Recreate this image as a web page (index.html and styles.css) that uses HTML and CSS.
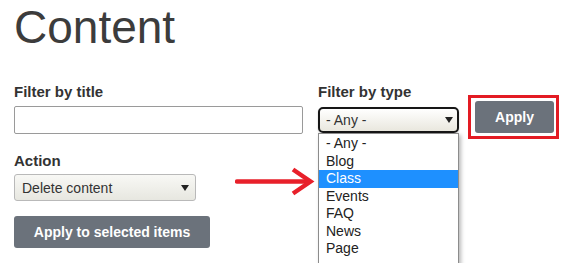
FILE: index.html
```html
<!DOCTYPE html>
<html lang="en">
<head>
<meta charset="utf-8">
<title>Content</title>
<link rel="stylesheet" href="styles.css">
</head>
<body>
<main class="page">
  <h1 class="title">Content</h1>
  <div class="filters">
    <div class="field field-title">
      <label class="label" for="ftitle">Filter by title</label>
      <input class="text-input" id="ftitle" type="text">
    </div>
    <div class="field field-type">
      <span class="label">Filter by type</span>
      <div class="select select-type"><span>- Any -</span><span class="caret"></span></div>
      <ul class="listbox">
        <li class="option">- Any -</li>
        <li class="option">Blog</li>
        <li class="option option-active">Class</li>
        <li class="option">Events</li>
        <li class="option">FAQ</li>
        <li class="option">News</li>
        <li class="option">Page</li>
      </ul>
    </div>
    <div class="highlight">
      <button class="btn btn-apply" type="button">Apply</button>
    </div>
  </div>
  <div class="field action">
    <span class="label">Action</span>
    <div class="select select-action"><span>Delete content</span><span class="caret"></span></div>
  </div>
  <button class="btn btn-wide" type="button">Apply to selected items</button>
  <svg class="arrow" width="82" height="34" viewBox="0 0 82 34" aria-hidden="true">
    <line x1="2" y1="16.5" x2="74" y2="16.5" stroke="#e8202a" stroke-width="4.5" stroke-linecap="round"/>
    <polyline points="58,4.5 75.5,16.5 58,28.5" fill="none" stroke="#e8202a" stroke-width="4.5" stroke-linejoin="miter"/>
  </svg>
</main>
</body>
</html>
```

FILE: styles.css
```css
* { box-sizing: border-box; }
html, body { margin: 0; padding: 0; background: #fff; overflow: hidden; }
body { font-family: "Liberation Sans", Arial, sans-serif; color: #333; }

.page { position: relative; padding-left: 14px; height: 263px; overflow: hidden; }

.title {
  margin: 1px 0 0 0;
  font-size: 46px;
  line-height: 53px;
  font-weight: normal;
  color: #3c3c3c;
}

.filters {
  display: flex;
  align-items: flex-start;
  margin-top: 29px;
}

.field { display: flex; flex-direction: column; align-items: flex-start; }

.label {
  font-size: 15px;
  line-height: 18px;
  font-weight: bold;
  color: #333;
}

.field-title { width: 289px; margin-right: 15px; }
.text-input {
  margin-top: 5px;
  width: 289px;
  height: 28px;
  border: 1px solid #9a9a9a;
  border-radius: 2px;
  background: #fff;
  font: 14px "Liberation Sans", Arial, sans-serif;
}

.field-type { position: relative; width: 141px; margin-right: 9px; }

.select {
  display: flex;
  align-items: center;
  justify-content: space-between;
  font-size: 14px;
  color: #333;
}
.caret {
  width: 0; height: 0;
  border-left: 4.5px solid transparent;
  border-right: 4.5px solid transparent;
  border-top: 6px solid #222;
}
.select-type {
  margin-top: 6px;
  width: 141px;
  height: 26px;
  border: 2px solid #161616;
  border-radius: 5px;
  padding: 0 4px 0 6px;
  background: linear-gradient(#ffffff, #e9e7de);
  box-shadow: 0 1px 2px rgba(0,0,0,0.2);
}

.listbox {
  position: absolute;
  left: 0;
  top: 50px;
  width: 141px;
  margin: 0;
  padding: 1px 0 12px 0;
  list-style: none;
  background: #fff;
  border: 1px solid #8c8c8c;
  box-shadow: 2px 2px 4px rgba(0,0,0,0.28);
}
.option {
  height: 17.5px;
  line-height: 17.5px;
  padding-left: 7px;
  font-size: 14px;
  color: #222;
}
.option-active { background: #1e90ff; color: #fff; }

.highlight {
  margin-top: 12px;
  border: 3px solid #e31b23;
  padding: 3px 2px 3px 4px;
}

.btn {
  display: block;
  border: 0;
  border-radius: 3px;
  background: #6b727b;
  color: #fff;
  font: bold 14px "Liberation Sans", Arial, sans-serif;
  height: 32px;
  padding: 0;
  cursor: pointer;
}
.btn-apply { width: 79px; }

.action { margin-top: 13px; }
.select-action {
  margin-top: 4px;
  width: 182px;
  height: 27px;
  border: 1px solid #b9b9b9;
  border-radius: 3px;
  padding: 0 6px 0 7px;
  background: linear-gradient(#f8f8f5, #e7e7e0);
}

.btn-wide { margin-top: 15px; width: 196px; }

.arrow { position: absolute; left: 235px; top: 165px; }
```
